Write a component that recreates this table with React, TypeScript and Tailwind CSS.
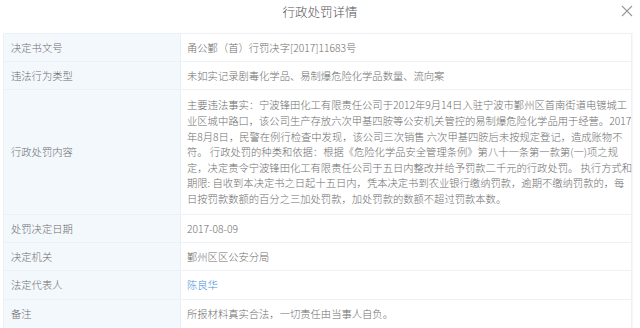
import React from 'react';

const font = { fontFamily: '"Noto Sans CJK SC", "Noto Sans", sans-serif' };

const contentLines = [
  '主要违法事实：宁波锋田化工有限责任公司于2012年9月14日入驻宁波市鄞州区首南街道电镀城工',
  '业区城中路口，该公司生产存放六次甲基四胺等公安机关管控的易制爆危险化学品用于经营。2017',
  '年8月8日，民警在例行检查中发现，该公司三次销售 六次甲基四胺后未按规定登记，造成账物不',
  '符。 行政处罚的种类和依据：根据《危险化学品安全管理条例》第八十一条第一款第(一)项之规',
  '定，决定责令宁波锋田化工有限责任公司于五日内整改并给予罚款二千元的行政处罚。 执行方式和',
  '期限: 自收到本决定书之日起十五日内，凭本决定书到农业银行缴纳罚款，逾期不缴纳罚款的，每',
  '日按罚款数额的百分之三加处罚款，加处罚款的数额不超过罚款本数。',
];

function Row({ label, children, h = 'h-[28px]' }: { label: string; children: React.ReactNode; h?: string }) {
  return (
    <div className={`grid grid-cols-[177px_1fr] border-b border-[#edf1f5] ${h}`}>
      <div className="flex items-center bg-[#f3f8fd] pl-[7px] text-[#6e6e6e] border-r border-[#e9eff5]">{label}</div>
      <div className="flex items-center pl-[6px] text-[#6e6e6e]">{children}</div>
    </div>
  );
}

export default function App() {
  return (
    <div className="w-[640px] h-[328px] bg-white overflow-hidden text-[10.3px] leading-[15.6px] font-light" style={font}>
      <div className="relative h-[33px] flex justify-center">
        <span className="pt-[4px] text-[12.5px] text-[#555]">行政处罚详情</span>
        <svg className="absolute right-[6px] top-[4px]" width="14" height="14" viewBox="0 0 14 14">
          <path d="M2 2 L12 12 M12 2 L2 12" stroke="#999" strokeWidth="1.1" fill="none" />
        </svg>
      </div>
      <div className="ml-[3px] w-[629px] border-t border-x border-[#edf1f5] shadow-[1px_0_1px_rgba(0,0,0,0.03)]">
        <Row label="决定书文号">甬公鄞（首）行罚决字[2017]11683号</Row>
        <Row label="违法行为类型">未如实记录剧毒化学品、易制爆危险化学品数量、流向案</Row>
        <Row label="行政处罚内容" h="h-[125px]">
          <div className="py-[7px]">
            {contentLines.map((l, i) => (
              <div key={i} className="whitespace-pre">{l}</div>
            ))}
          </div>
        </Row>
        <Row label="处罚决定日期">2017-08-09</Row>
        <Row label="决定机关">鄞州区区公安分局</Row>
        <Row label="法定代表人" h="h-[29px]">
          <span className="text-[#4a92dc]">陈良华</span>
        </Row>
        <Row label="备注" h="h-[29px]">所报材料真实合法，一切责任由当事人自负。</Row>
      </div>
    </div>
  );
}
